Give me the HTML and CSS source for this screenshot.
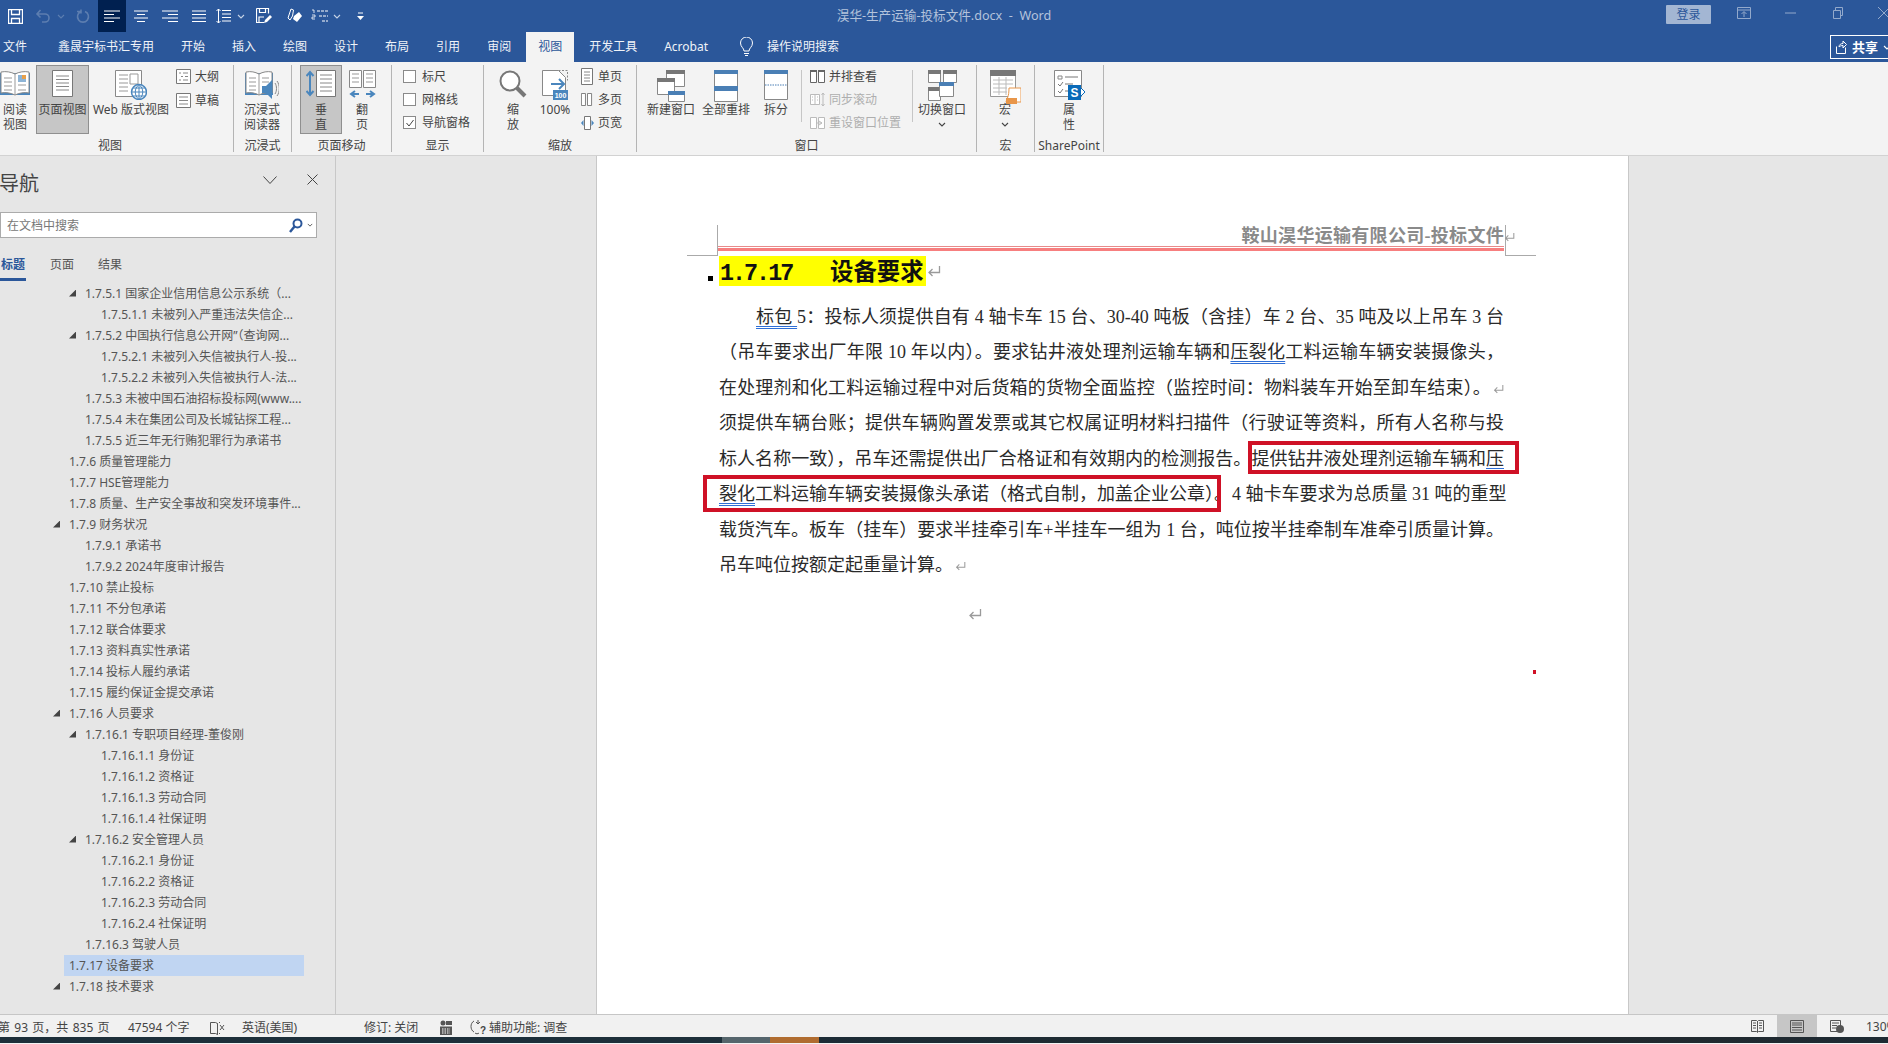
FILE: index.html
```html
<!DOCTYPE html>
<html lang="zh">
<head>
<meta charset="utf-8">
<title>Word</title>
<link rel="stylesheet" href="styles.css">
</head>
<body>
<svg class="defs" width="0" height="0"><defs>
<symbol id="ret" viewBox="0 0 14 12"><path d="M12.5 1v6.5H2M5.5 4 2 7.5 5.5 11" fill="none" stroke="currentColor" stroke-width="1.3"/></symbol>
<symbol id="chev" viewBox="0 0 8 5"><path d="M1 1l3 3 3-3" fill="none" stroke="currentColor" stroke-width="1.1"/></symbol>
</defs></svg>

<header class="titlebar">
  <div class="qat">
    <span class="q w30"><svg width="15" height="15" viewBox="0 0 15 15"><path d="M.5.5h14v14H.5zM3.500.5v5h8v-5M3.500 14.500v-5h8v5" fill="none" stroke="#fff" stroke-width="1.300"/></svg></span>
    <span class="q w24 dim"><svg width="15" height="14" viewBox="0 0 15 14"><path d="M2 5h8a4 4 0 0 1 0 8H7M5.500 1 2 5l3.500 3.500" fill="none" stroke="currentColor" stroke-width="1.600"/></svg></span>
    <span class="q w14 dim"><svg width="8" height="5"><use href="#chev"/></svg></span>
    <span class="q w30 dim"><svg width="14" height="14" viewBox="0 0 14 14"><path d="M9 2.500a5.500 5.500 0 1 1-4 0M5 .5v4M5 2.500H1" fill="none" stroke="currentColor" stroke-width="1.600"/></svg></span>
    <span class="q w28 active"><svg width="16" height="12"><path d="M0 1h16M0 4.500h10M0 8h16M0 11.500h10" stroke="#fff"/></svg></span>
    <span class="q w29"><svg width="14" height="12"><path d="M0 1h14M3 4.500h8M0 8h14M3 11.500h8" stroke="#fff"/></svg></span>
    <span class="q w29"><svg width="16" height="12"><path d="M0 1h16M6 4.500h10M0 8h16M6 11.500h10" stroke="#fff"/></svg></span>
    <span class="q w29"><svg width="14" height="12"><path d="M0 1h14M0 4.500h14M0 8h14M0 11.500h14" stroke="#fff"/></svg></span>
    <span class="q w21"><svg width="15" height="16" viewBox="0 0 15 16"><path d="M6 2.500h9M6 6h9M6 9.500h9M6 13h9M2.500 1v14M.5 3l2-2 2 2M.5 13l2 2 2-2" fill="none" stroke="#fff"/></svg></span>
    <span class="q w14 dim2"><svg width="8" height="5"><use href="#chev"/></svg></span>
    <span class="q w32"><svg width="16" height="16" viewBox="0 0 16 16"><path d="M.5.500h12v5M8 14.500H.5V.5M3.500.5v4h6v-4M3 14v-5h5" fill="none" stroke="#fff" stroke-width="1.200"/><path d="M8 15l1-3 5-5 2 2-5 5z" fill="#fff"/></svg></span>
    <span class="q w28"><svg width="15" height="16" viewBox="0 0 15 16"><path d="M4 1l2.500 1-1 6L3 12 1 10z" fill="none" stroke="#fff"/><path d="M7 8l5-4 3 4-5 6-4-3z" fill="#fff"/></svg></span>
    <span class="q w22"><svg width="17" height="14" viewBox="0 0 17 14"><path d="M6 2h11M8 7h9M11 12h6" stroke="#fff" stroke-dasharray="3 1"/><path d="M1 1h2v3M1 6h3v2H1v2h3" fill="none" stroke="#fff" stroke-width=".8"/></svg></span>
    <span class="q w14 dim2"><svg width="8" height="5"><use href="#chev"/></svg></span>
    <span class="q w32"><svg width="7" height="8"><path d="M1 1h5" stroke="#fff"/><path d="M0 4h7L3.500 8z" fill="#fff"/></svg></span>
  </div>
  <div class="doc-title">淏华-生产运输-投标文件.docx &nbsp;-&nbsp; Word</div>
  <div class="win">
    <span class="login">登录</span>
    <svg class="wi wi-a" width="14" height="12" viewBox="0 0 14 12"><path d="M.5.5h13v11H.5zM.5 3h13M7 10V5M4.500 7 7 4.500 9.500 7" fill="none" stroke="currentColor"/></svg>
    <svg class="wi wi-b" width="11" height="2"><path d="M0 1h11" stroke="currentColor"/></svg>
    <svg class="wi wi-c" width="10" height="12" viewBox="0 0 10 12"><path d="M.5 3.500h7v8h-7zM2.500 3.500v-3h7v8h-2" fill="none" stroke="currentColor"/></svg>
    <svg class="wi wi-d" width="12" height="12" viewBox="0 0 12 12"><path d="M0 0l12 12M12 0 0 12" stroke="currentColor"/></svg>
  </div>
</header>

<nav class="tabs">
  <span class="tab first">文件</span>
  <span class="tab">鑫晟宇标书汇专用</span>
  <span class="tab">开始</span>
  <span class="tab">插入</span>
  <span class="tab">绘图</span>
  <span class="tab">设计</span>
  <span class="tab">布局</span>
  <span class="tab">引用</span>
  <span class="tab">审阅</span>
  <span class="tab current">视图</span>
  <span class="tab">开发工具</span>
  <span class="tab">Acrobat</span>
  <svg class="bulb" width="13" height="20" viewBox="0 0 13 20"><path d="M4 14c0-3-3.500-4-3.500-8a6 6 0 0 1 12 0c0 4-3.500 5-3.500 8zM4 16.500h5M5 18.500h3" fill="none" stroke="#fff"/></svg>
  <span class="tab tell">操作说明搜索</span>
  <span class="share"><svg width="11" height="14" viewBox="0 0 11 14"><path d="M.5 6.500v7h9v-6M3 7c0-2.500 2-3.500 4-3.500V1l3.500 3.500L7 8V5.500C5 5.500 4 6 3 7z" fill="none" stroke="#fff"/></svg><b>共享</b><svg class="share-chev" width="8" height="5"><use href="#chev"/></svg></span>
</nav>

<section class="ribbon">
  <div class="grp g1">
    <div class="body">
      <div class="lg w30b">
        <div class="ic"><svg width="30" height="27" viewBox="0 0 30 27"><path d="M0 25h30V3H0z" fill="#4a86bd"/><path d="M1 2c5-1 10 0 14 2 4-2 9-3 14-2v21c-5-1-10 0-14 2-4-2-9-3-14-2z" fill="#fff" stroke="#888"/><path d="M15 4v21M4 8h8M4 12h8M4 16h8M4 20h8M18 15h8M18 20h8" stroke="#999"/><path d="M18 5h8v7h-8z" fill="#8db4d6"/><path d="M22 5h4v4h-4z" fill="#e8a04a"/></svg></div>
        <span class="lb">阅读<br>视图</span>
      </div>
      <div class="lg sel m6 w53">
        <div class="ic"><svg width="21" height="27" viewBox="0 0 21 27"><path d="M.5.500h20v26H.500z" fill="#fff" stroke="#777"/><path d="M4 6h13M4 9.500h13M4 13h13M4 16.500h13M4 20h13" stroke="#888"/></svg></div>
        <span class="lb">页面视图</span>
      </div>
      <div class="lg m1 w82">
        <div class="ic"><svg width="32" height="30" viewBox="0 0 32 30"><path d="M.5.500h26v26H.500z" fill="#fff" stroke="#888"/><path d="M4 5h9M4 9h9M4 13h9M4 17h9M4 21h9" stroke="#999"/><path d="M15 4h8v10h-8z" fill="none" stroke="#999"/><circle cx="24" cy="22" r="7.500" fill="#fff" stroke="#4a86bd" stroke-width="1.500"/><path d="M16.500 22h15M24 14.500v15M18 18h12M18 26h12M24 14.500c-5 4-5 11 0 15M24 14.500c5 4 5 11 0 15" fill="none" stroke="#4a86bd"/></svg></div>
        <span class="lb">Web 版式视图</span>
      </div>
      <div class="sm-col m4">
        <div class="sm"><svg width="15" height="15" viewBox="0 0 15 15"><path d="M.5.500h14v14H.500z" fill="#fff" stroke="#777"/><path d="M3 4h2M7 4h5M5 7.500h2M9 7.500h3M3 11h2M7 11h5" stroke="#888"/></svg><span>大纲</span></div>
        <div class="sm"><svg width="15" height="15" viewBox="0 0 15 15"><path d="M.5.500h14v14H.500z" fill="#fff" stroke="#777"/><path d="M3 4h9M3 7.500h9M3 11h9" stroke="#888"/></svg><span>草稿</span></div>
      </div>
    </div>
    <div class="gl gl-view">视图</div>
  </div>

  <div class="grp g2">
    <div class="body">
      <div class="lg w57">
        <div class="ic"><svg width="34" height="30" viewBox="0 0 34 30"><path d="M0 25h28V3H0z" fill="#4a86bd"/><path d="M1 2c5-1 9 0 13 2 4-2 8-3 13-2v21c-5-1-9 0-13 2-4-2-8-3-13-2z" fill="#fff" stroke="#888"/><path d="M14 4v21M4 8h7M4 12h7M4 16h7M4 20h7M17 8h7M17 12h7" stroke="#999"/><path d="M17 16h4l6-6v19l-6-6h-4z" fill="#4a86bd"/><path d="M30 13c2 3 2 8 0 11M32 11c3 4 3 11 0 15" fill="none" stroke="#888"/></svg></div>
        <span class="lb">沉浸式<br>阅读器</span>
      </div>
    </div>
    <div class="gl">沉浸式</div>
  </div>

  <div class="grp g3">
    <div class="body">
      <div class="lg sel m8 w42">
        <div class="ic"><svg width="30" height="27" viewBox="0 0 30 27"><path d="M10.500.500h19v26h-19z" fill="#fff" stroke="#777"/><path d="M14 5h12M14 9h12M14 13h12M14 17h12M14 21h12" stroke="#888"/><path d="M4 2v23M.5 6 4 2l3.500 4M.5 21 4 25l3.500-4" fill="none" stroke="#4a86bd" stroke-width="2"/></svg></div>
        <span class="lb">垂<br>直</span>
      </div>
      <div class="lg w40">
        <div class="ic"><svg width="27" height="28" viewBox="0 0 27 28"><path d="M.5.500h12v17H.500zM14.500.500h12v17h-12z" fill="#fff" stroke="#888"/><path d="M3 4h7M3 8h7M3 12h7M17 4h7M17 8h7M17 12h7" stroke="#999"/><path d="M2 24h8M6 21l-4 3 4 3M17 24h8M21 21l4 3-4 3" fill="none" stroke="#4a86bd" stroke-width="2"/></svg></div>
        <span class="lb">翻<br>页</span>
      </div>
    </div>
    <div class="gl">页面移动</div>
  </div>

  <div class="grp g4">
    <div class="body">
      <div class="sm-col m11">
        <div class="sm chk"><i class="box"></i><span>标尺</span></div>
        <div class="sm chk"><i class="box"></i><span>网格线</span></div>
        <div class="sm chk"><i class="box"><svg width="10" height="10" viewBox="0 0 10 10"><path d="M1.500 5l2.500 3 4.500-6" fill="none" stroke="#444"/></svg></i><span>导航窗格</span></div>
      </div>
    </div>
    <div class="gl">显示</div>
  </div>

  <div class="grp g5">
    <div class="body">
      <div class="lg m9 w40">
        <div class="ic"><svg width="28" height="28" viewBox="0 0 28 28"><circle cx="11" cy="11" r="9.500" fill="#fff" stroke="#777" stroke-width="2"/><path d="M18 18l8 8" stroke="#777" stroke-width="4"/></svg></div>
        <span class="lb">缩<br>放</span>
      </div>
      <div class="lg w44">
        <div class="ic"><svg width="27" height="30" viewBox="0 0 27 30"><path d="M.5.500h16l7 7v18H.500z" fill="#fff" stroke="#888"/><path d="M16.500.5h9v10" fill="none" stroke="#888" stroke-dasharray="2 1.500"/><path d="M9 14h12M17 9l5 5-5 5" fill="none" stroke="#4a86bd" stroke-width="2"/><rect x="11" y="20" width="15" height="10" fill="#4a86bd"/><text x="18.500" y="28" class="t100">100</text></svg></div>
        <span class="lb">100%</span>
      </div>
      <div class="sm-col m4">
        <div class="sm"><svg width="13" height="17" viewBox="0 0 13 17"><path d="M.5.500h11v16H.500z" fill="#fff" stroke="#777"/><path d="M3 4h6M3 7h6M3 10h6M3 13h6" stroke="#888"/></svg><span>单页</span></div>
        <div class="sm"><svg width="13" height="13" viewBox="0 0 16 13" preserveAspectRatio="none"><path d="M.5.500h5v12h-5zM8 .5h5v12H8z" fill="#fff" stroke="#777"/></svg><span>多页</span></div>
        <div class="sm"><svg width="13" height="14" viewBox="0 0 13 14"><path d="M3.500.500h6v13h-6z" fill="#fff" stroke="#777"/><path d="M2.500 4 0 7l2.500 3zM10.500 4 13 7l-2.500 3z" fill="#4a86bd"/></svg><span>页宽</span></div>
      </div>
    </div>
    <div class="gl">缩放</div>
  </div>

  <div class="grp g6">
    <div class="body">
      <div class="lg m7 w54">
        <div class="ic"><svg width="28" height="32" viewBox="0 0 28 32"><path d="M9.500.500h18v16h-18z" fill="#fff" stroke="#888"/><path d="M9 0h19v4H9z" fill="#777"/><path d="M.5 8.500h17v16H.500z" fill="#fff" stroke="#888"/><path d="M0 8h18v4H0z" fill="#777"/><path d="M11.500 21.500h16v10h-16z" fill="#fff" stroke="#888"/><path d="M11 21h17v4H11z" fill="#4a7fb5"/></svg></div>
        <span class="lb">新建窗口</span>
      </div>
      <div class="lg m1 w54">
        <div class="ic"><svg width="24" height="32" viewBox="0 0 24 32"><path d="M.5.500h23v31H.500z" fill="#fff" stroke="#888"/><path d="M0 0h24v4H0zM0 16h24v5H0z" fill="#4a7fb5"/></svg></div>
        <span class="lb">全部重排</span>
      </div>
      <div class="lg w46">
        <div class="ic"><svg width="24" height="30" viewBox="0 0 24 30"><path d="M.5.500h23v29H.500z" fill="#fff" stroke="#888"/><path d="M0 0h24v4H0z" fill="#4a7fb5"/><path d="M1 15h22" stroke="#4a7fb5" stroke-dasharray="1.500 1"/></svg></div>
        <span class="lb">拆分</span>
      </div>
      <i class="vsep m2"></i>
      <div class="sm-col m8 w102">
        <div class="sm win-sm"><svg width="15" height="13" viewBox="0 0 15 13"><path d="M.5 1.500h6v11h-6zM8.500 1.500h6v11h-6z" fill="#fff" stroke="#666"/><path d="M0 0h7v2H0zM8 0h7v2H8z" fill="#666"/></svg><span>并排查看</span></div>
        <div class="sm win-sm off"><svg width="15" height="15" viewBox="0 0 15 15"><path d="M.5 2.500h9v10h-9z" fill="#fff" stroke="#bbb"/><path d="M5 3v9M2 5h1M2 8h1M7 5h1M7 8h1M13 1v13M11.500 3 13 1l1.500 2M11.500 12l1.500 2 1.500-2" fill="none" stroke="#bbb"/></svg><span>同步滚动</span></div>
        <div class="sm win-sm off"><svg width="15" height="13" viewBox="0 0 15 13"><path d="M.5 1.500h6v11h-6zM8.500 1.500h6v11h-6z" fill="#fff" stroke="#bbb"/><path d="M6 7h6M9 5l3 2-3 2" fill="none" stroke="#bbb"/></svg><span>重设窗口位置</span></div>
      </div>
      <i class="vsep"></i>
      <div class="lg w58">
        <div class="ic"><svg width="29" height="32" viewBox="0 0 29 32"><path d="M.5.500h12v12H.500zM15.500.500h13v12h-13zM.5 17.500h12v13H.500z" fill="#fff" stroke="#888"/><path d="M0 0h13v4H0zM15 0h14v4H15zM0 17h13v4H0z" fill="#777"/><path d="M11.500 12.500h14v14h-14z" fill="#fff" stroke="#888"/><path d="M11 12h15v4H11z" fill="#4a7fb5"/></svg></div>
        <span class="lb">切换窗口<br><svg class="lb-chev" width="8" height="5"><use href="#chev"/></svg></span>
      </div>
    </div>
    <div class="gl">窗口</div>
  </div>

  <div class="grp g7">
    <div class="body">
      <div class="lg w57">
        <div class="ic"><svg width="31" height="34" viewBox="0 0 31 34"><path d="M.5.500h25v26H.500z" fill="#fff" stroke="#999"/><path d="M0 0h26v6H0z" fill="#777"/><path d="M3 10h20M3 14h20M3 18h14M3 22h14M9 7v18M16 7v18" stroke="#bbb"/><path d="M19 18h12v14H16c1-4 3-5 3-14z" fill="#fff" stroke="#e8964a"/><path d="M16 28h11v6H16z" fill="#e8964a"/></svg></div>
        <span class="lb">宏<br><svg class="lb-chev" width="8" height="5"><use href="#chev"/></svg></span>
      </div>
    </div>
    <div class="gl">宏</div>
  </div>

  <div class="grp g8">
    <div class="body">
      <div class="lg w68">
        <div class="ic"><svg width="31" height="31" viewBox="0 0 31 31"><path d="M.5.500h27v26H.500z" fill="#fff" stroke="#888"/><path d="M4 6h4v3H4z" fill="none" stroke="#888"/><path d="M11 7h13M11 14h8M11 21h6M4 14l2 2 3-4M4 21l2 2 3-4" fill="none" stroke="#777"/><path d="M24 15l7 7-7 7z" fill="#fff" stroke="#0a6ab8"/><path d="M14 15h13v15H14z" fill="#0a6ab8"/><text x="20.500" y="27" class="ts">S</text></svg></div>
        <span class="lb">属<br>性</span>
      </div>
    </div>
    <div class="gl">SharePoint</div>
  </div>
</section>

<main class="main">
  <aside class="nav">
    <div class="nav-head">
      <span class="nav-title">导航</span>
      <svg class="nav-chev" width="14" height="8" viewBox="0 0 14 8"><path d="M.5.500 7 7.500 13.500.5" fill="none" stroke="#444"/></svg>
      <svg class="nav-x" width="11" height="11" viewBox="0 0 11 11"><path d="M.5.500l10 10M10.500.500l-10 10" stroke="#444"/></svg>
    </div>
    <div class="search">
      <span class="ph">在文档中搜索</span>
      <svg width="14" height="15" viewBox="0 0 14 15"><circle cx="8.500" cy="5.500" r="4" fill="none" stroke="#2b579a" stroke-width="2"/><path d="M5.500 8.500 1 14" stroke="#2b579a" stroke-width="2.500"/></svg>
      <svg class="s-chev" width="6" height="4" viewBox="0 0 8 5"><use href="#chev"/></svg>
    </div>
    <div class="nav-tabs">
      <span class="nt on">标题</span>
      <span class="nt">页面</span>
      <span class="nt">结果</span>
    </div>
    <ul class="tree">
      <li class="l2 open">1.7.5.1 国家企业信用信息公示系统（...</li>
      <li class="l3">1.7.5.1.1 未被列入严重违法失信企...</li>
      <li class="l2 open">1.7.5.2 中国执行信息公开网”（查询网...</li>
      <li class="l3">1.7.5.2.1 未被列入失信被执行人-投...</li>
      <li class="l3">1.7.5.2.2 未被列入失信被执行人-法...</li>
      <li class="l2">1.7.5.3 未被中国石油招标投标网(www....</li>
      <li class="l2">1.7.5.4 未在集团公司及长城钻探工程...</li>
      <li class="l2">1.7.5.5 近三年无行贿犯罪行为承诺书</li>
      <li class="l1">1.7.6 质量管理能力</li>
      <li class="l1">1.7.7 HSE管理能力</li>
      <li class="l1">1.7.8 质量、生产安全事故和突发环境事件...</li>
      <li class="l1 open">1.7.9 财务状况</li>
      <li class="l2">1.7.9.1 承诺书</li>
      <li class="l2">1.7.9.2 2024年度审计报告</li>
      <li class="l1">1.7.10 禁止投标</li>
      <li class="l1">1.7.11 不分包承诺</li>
      <li class="l1">1.7.12 联合体要求</li>
      <li class="l1">1.7.13 资料真实性承诺</li>
      <li class="l1">1.7.14 投标人履约承诺</li>
      <li class="l1">1.7.15 履约保证金提交承诺</li>
      <li class="l1 open">1.7.16 人员要求</li>
      <li class="l2 open">1.7.16.1 专职项目经理-董俊刚</li>
      <li class="l3">1.7.16.1.1 身份证</li>
      <li class="l3">1.7.16.1.2 资格证</li>
      <li class="l3">1.7.16.1.3 劳动合同</li>
      <li class="l3">1.7.16.1.4 社保证明</li>
      <li class="l2 open">1.7.16.2 安全管理人员</li>
      <li class="l3">1.7.16.2.1 身份证</li>
      <li class="l3">1.7.16.2.2 资格证</li>
      <li class="l3">1.7.16.2.3 劳动合同</li>
      <li class="l3">1.7.16.2.4 社保证明</li>
      <li class="l2">1.7.16.3 驾驶人员</li>
      <li class="l1 cur">1.7.17 设备要求</li>
      <li class="l1 open">1.7.18 技术要求</li>
    </ul>
  </aside>

  <div class="canvas">
    <article class="page">
      <i class="crop crop-lv"></i><i class="crop crop-lh"></i>
      <i class="crop crop-rv"></i><i class="crop crop-rh"></i>
      <div class="hdr">鞍山淏华运输有限公司-投标文件<svg class="ret hret"><use href="#ret"/></svg></div>
      <div class="hdr-rule"></div>
      <h1 class="h"><i class="bullet"></i><span class="mark"><span class="num">1.7.17</span>设备要求</span><svg class="ret hret2"><use href="#ret"/></svg></h1>
      <div class="para">
        <div class="ln ind"><span class="dbl">标包 </span>5：投标人须提供自有 4 轴卡车 15 台、30-40 吨板（含挂）车 2 台、35 吨及以上吊车 3 台</div>
        <div class="ln">（吊车要求出厂年限 10 年以内）。要求钻井液处理剂运输车辆和<span class="dbl">压裂化</span>工料运输车辆安装摄像头，</div>
        <div class="ln">在处理剂和化工料运输过程中对后货箱的货物全面监控（监控时间：物料装车开始至卸车结束）。<svg class="ret rsm"><use href="#ret"/></svg></div>
        <div class="ln">须提供车辆台账；提供车辆购置发票或其它权属证明材料扫描件（行驶证等资料，所有人名称与投</div>
        <div class="ln">标人名称一致），吊车还需提供出厂合格证和有效期内的检测报告。提供钻井液处理剂运输车辆和<span class="dbl">压</span></div>
        <div class="ln"><span class="dbl">裂化</span>工料运输车辆安装摄像头承诺（格式自制，加盖企业公章）。4 轴卡车要求为总质量 31 吨的重型</div>
        <div class="ln">载货汽车。板车（挂车）要求半挂牵引车+半挂车一组为 1 台，吨位按半挂牵制车准牵引质量计算。</div>
        <div class="ln end">吊车吨位按额定起重量计算。<svg class="ret rsm"><use href="#ret"/></svg></div>
      </div>
      <div class="blank"><svg class="ret rbig"><use href="#ret"/></svg></div>
      <i class="redbox rb1"></i>
      <i class="redbox rb2"></i>
      <i class="reddot"></i>
    </article>
  </div>
</main>

<footer class="status">
  <div class="st-left">
    <span class="c c1">第 93 页，共 835 页</span>
    <span class="c c2">47594 个字</span>
    <span class="c c3"><svg width="15" height="15" viewBox="0 0 15 15"><path d="M.5 2.500h5l2 1v11l-2-1h-5zM7.500 3.500v11M9 2.500h1M9 13.500h1" fill="none" stroke="#555"/><path d="M10 5l4 5M14 5l-4 5" stroke="#555"/></svg></span>
    <span class="c c4">英语(美国)</span>
    <span class="c c5">修订: 关闭</span>
    <span class="c c6"><svg width="12" height="15" viewBox="0 0 12 15"><circle cx="3" cy="3" r="2.500" fill="#555"/><path d="M6 1h6v4H6zM0 6.500h12V15H0z" fill="#555"/><path d="M2 9h8M2 11h8M2 13h8" stroke="#fff" stroke-dasharray="1.500 1"/></svg></span>
    <span class="c c7"><svg width="17" height="16" viewBox="0 0 17 16"><path d="M4 2C0 4 0 11 4 13M8 1v4M6 3l2 2 2-2M9 14c-1 1-3 1-4 0" fill="none" stroke="#555"/><text x="13" y="15" class="tq">?</text></svg>辅助功能: 调查</span>
  </div>
  <div class="st-right">
    <span class="vb"><svg width="13" height="13" viewBox="0 0 13 13"><path d="M.5.500h5l1 1 1-1h5v11h-5l-1 1-1-1h-5z" fill="none" stroke="#555"/><path d="M6.500 1v11M2 3h3M2 5.500h3M2 8h3M8 3h3M8 5.500h3M8 8h3" stroke="#555"/></svg></span>
    <span class="vb vb-on"><svg width="14" height="13" viewBox="0 0 14 13"><path d="M.5.500h13v12H.500z" fill="none" stroke="#555"/><path d="M2 3h10M2 5h10M2 7.500h10M2 10h10" stroke="#555"/></svg></span>
    <span class="vb"><svg width="14" height="13" viewBox="0 0 14 13"><path d="M.5.500h10v11H.500z" fill="#f1f1f1" stroke="#555"/><path d="M2 3h7M2 5.500h5M2 8h4" stroke="#555"/><circle cx="10" cy="9" r="4" fill="#555"/></svg></span>
    <span class="zoom">130%</span>
  </div>
</footer>
<div class="taskbar"></div>
</body>
</html>
```

FILE: styles.css
```css
* { box-sizing: border-box; }
html, body { margin: 0; padding: 0; }
body {
  width: 1888px;
  height: 1044px;
  overflow: hidden;
  position: relative;
  font: 12px/15px "Noto Sans", "Noto Sans CJK SC", sans-serif;
  color: #444;
  background: #f3f3f3;
}
.defs { position: absolute; }
svg { display: block; flex: none; }

/* title bar */
.titlebar {
  height: 32px;
  background: #2b579a;
  display: grid;
  grid-template-columns: 1fr auto 1fr;
  align-items: center;
  color: #fff;
}
.qat { display: flex; height: 32px; }
.q { display: flex; align-items: center; justify-content: center; height: 32px; color: #fff; }
.dim { color: #5d7eb0; }
.dim2 { color: #c6d3e6; }
.active { background: #002050; }
.w14 { width: 14px; }
.w21 { width: 21px; }
.w22 { width: 22px; }
.w24 { width: 24px; }
.w28 { width: 28px; }
.w29 { width: 29px; }
.w30 { width: 30px; }
.w32 { width: 32px; }
.doc-title { color: #b4c3dc; font-size: 12.600px; line-height: 30px; height: 30px; white-space: nowrap; }
.win { display: flex; align-items: center; justify-content: flex-end; color: #93a9cb; height: 32px; overflow: hidden; }
.login {
  width: 45px; height: 19px; margin-top: -3px;
  background: #a3b6d3; color: #2b579a; border-radius: 1px;
  text-align: center; line-height: 19px;
}
.wi { margin-top: -6px; }
.wi-a { margin-left: 26px; }
.wi-b { margin-left: 34px; }
.wi-c { margin-left: 37px; }
.wi-d { margin-left: 35px; margin-right: -2px; }

/* tabs */
.tabs {
  height: 30px;
  background: #2b579a;
  display: flex;
  align-items: stretch;
  gap: 27px;
  padding-left: 3px;
  color: #fff;
  overflow: hidden;
}
.tab { line-height: 30px; height: 30px; white-space: nowrap; color: #f0f3f8; }
.tab.first { margin-right: 4px; }
.tab.current {
  background: #f3f3f3; color: #2b579a;
  padding: 0 12px; margin: 0 -12px;
}
.bulb { margin: 5px 0 0 5px; }
.tell { margin-left: -13px; }
.share {
  margin-left: auto;
  margin-right: -6px;
  margin-top: 3px;
  height: 24px;
  width: 64px;
  border: 1px solid #fff;
  display: flex;
  align-items: center;
  padding-left: 5px;
  color: #fff;
}
.share b { font-size: 13px; margin-left: 5px; }
.share-chev { margin-left: 5px; color: #fff; }

/* ribbon */
.ribbon {
  height: 94px;
  background: #f3f3f3;
  border-bottom: 1px solid #d2d2d2;
  display: flex;
  padding-top: 3px;
  overflow: hidden;
}
.grp { height: 87px; border-right: 1px solid #b4b4b4; display: flex; flex-direction: column; flex: none; }
.g1 { width: 234px; }
.g2 { width: 58px; }
.g3 { width: 100px; }
.g4 { width: 92px; }
.g5 { width: 153px; }
.g6 { width: 340px; }
.g7 { width: 58px; }
.g8 { width: 69px; }
.body { height: 69px; display: flex; }
.gl { height: 18px; padding-top: 4px; text-align: center; white-space: nowrap; }
.gl-view { padding-right: 13px; }
.lg {
  height: 69px;
  border: 1px solid transparent;
  padding-top: 4px;
  display: flex;
  flex-direction: column;
  align-items: center;
  flex: none;
}
.lg.sel { background: #c6c6c6; border-color: #8f8f8f; }
.ic { height: 32px; }
.lb { text-align: center; white-space: nowrap; color: #444; }
.lb-chev { margin: 5px auto 0; color: #444; }
.w30b { width: 30px; }
.w40 { width: 40px; }
.w42 { width: 42px; }
.w44 { width: 44px; }
.w46 { width: 46px; }
.w53 { width: 53px; }
.w54 { width: 54px; }
.w57 { width: 56px; }
.w58 { width: 58px; }
.w68 { width: 68px; }
.w82 { width: 82px; }
.w102 { width: 102px; flex: none; }
.m1 { margin-left: 1px; }
.m2 { margin-left: 2px; }
.m4 { margin-left: 4px; }
.m6 { margin-left: 6px; }
.m7 { margin-left: 7px; }
.m8 { margin-left: 8px; }
.m9 { margin-left: 9px; }
.m11 { margin-left: 11px; }
.sm-col { display: flex; flex-direction: column; padding-top: 0; }
.sm { height: 23.500px; display: flex; align-items: center; gap: 4px; white-space: nowrap; }
.chk { gap: 6px; }
.win-sm svg { width: 15px; }
.off { color: #aeaeae; }
.box {
  width: 13px; height: 13px; border: 1px solid #8a8a8a; background: #fff;
  display: flex; align-items: center; justify-content: center; flex: none;
}
.vsep { width: 1px; height: 52px; margin-top: 5px; background: #c6c6c6; flex: none; }
.t100 { font: bold 7px "Liberation Sans", sans-serif; fill: #fff; text-anchor: middle; }
.ts { font: bold 12px "Liberation Sans", sans-serif; fill: #fff; text-anchor: middle; }
.tq { font: bold 10px "Liberation Sans", sans-serif; fill: #444; text-anchor: middle; }

/* main */
.main { height: 858px; display: flex; overflow: hidden; }
.nav { width: 336px; flex: none; background: #e6e6e6; border-right: 1px solid #c8c8c8; display: flex; flex-direction: column; }
.nav-head { height: 54px; display: flex; align-items: center; position: relative; }
.nav-title { font-size: 20px; line-height: 54px; margin: 2px 0 0 -1px; color: #444; }
.nav-chev { margin-left: 224px; margin-top: -7px; }
.nav-x { margin-left: 30px; margin-top: -7px; }
.search {
  margin-top: 2px;
  width: 317px; height: 26px;
  background: #fff; border: 1px solid #ababab;
  display: flex; align-items: center; padding-left: 6px;
}
.ph { flex: 1; color: #777; }
.s-chev { margin: 0 3px 0 4px; color: #444; }
.nav-tabs { display: flex; gap: 24px; height: 43px; padding-left: 1px; }
.nt { height: 43px; padding-top: 19px; line-height: 16px; color: #555; }
.nt.on { color: #2b579a; font-weight: 600; border-bottom: 3px solid #2b579a; margin-left: -1px; padding: 19px 1px 0; width: 26px; }
.tree { list-style: none; margin: 1.500px 0 0; padding: 0; color: #555; }
.tree li { height: 21px; line-height: 21px; white-space: nowrap; position: relative; }
.l1 { padding-left: 69px; }
.l2 { padding-left: 85px; }
.l3 { padding-left: 101px; }
.open::before {
  content: "";
  position: absolute;
  top: 7px;
  width: 7px; height: 7px;
  background: #444;
  clip-path: polygon(100% 0, 100% 100%, 0 100%);
}
.l1.open::before { left: 53px; }
.l2.open::before { left: 69px; }
.tree .cur { margin-left: 64px; width: 240px; padding-left: 5px; background: #c0d5f2; }

/* document */
.canvas { flex: 1; background: #e6e6e6; padding-left: 260px; min-width: 0; overflow: hidden; }
.page {
  width: 1033px;
  height: 858px;
  background: #fff;
  border-left: 1px solid #c8c8c8;
  border-right: 1px solid #c8c8c8;
  padding: 69px 0 0 122px;
  position: relative;
  font-family: "Liberation Serif", "Noto Sans CJK SC", serif;
  color: #2a2a2a;
}
.page > * { width: 785px; }
.hdr {
  height: 21px;
  text-align: right;
  font-size: 18px;
  line-height: 23px;
  font-weight: 700;
  letter-spacing: .3px;
  color: #8a8a8a;
  white-space: nowrap;
  position: relative;
}
.hret { position: absolute; right: -11px; top: 7px; }
.ret { color: #9a9a9a; width: 11px; height: 10px; display: inline-block; }
.hdr-rule { height: 5px; width: 787px; margin-left: -2px; border-top: 1px solid #e88a8a; border-bottom: 3px solid #f77f7f; }
.h {
  margin: 4px 0 0;
  height: 31px;
  font: bold 23.400px/30px "Liberation Serif", "Noto Sans CJK SC", serif;
  color: #111;
  display: flex;
  align-items: center;
  position: relative;
}
.bullet { position: absolute; left: -11px; top: 21px; width: 5px; height: 5px; background: #000; }
.mark { background: #ff0; height: 30px; width: 207px; display: block; white-space: nowrap; line-height: 32px; }
.num { display: inline-block; width: 111px; padding-left: 1px; font-family: "Liberation Mono", monospace; letter-spacing: -2px; }
.hret2 { width: 14px; height: 12px; margin-left: 1px; }
.para { margin-top: 13.600px; }
.ln {
  height: 35.500px;
  line-height: 35.500px;
  font-size: 18px;
  text-align: justify;
  text-align-last: justify;
  white-space: nowrap;
}
.ln.ind { padding-left: 37px; }
.ln.end { text-align-last: left; }
.rsm { margin-left: 2px; }
.dbl { text-decoration: underline double #2f6fd6 1px; text-underline-offset: 3px; }
.blank { margin-top: 24.400px; display: flex; padding-left: 249px; }
.rbig { width: 14px; height: 12px; }

/* things drawn over the page */
.crop { position: absolute; background: #aaa; display: block; }
.crop-lv { left: 120px; top: 69px; width: 1px !important; height: 31px; }
.crop-lh { left: 90px; top: 99px; width: 30px !important; height: 1px; }
.crop-rv { left: 908px; top: 69px; width: 1px !important; height: 31px; }
.crop-rh { left: 908px; top: 99px; width: 31px !important; height: 1px; }
.redbox { position: absolute; border: 4px solid #cf1126; display: block; }
.rb1 { left: 651px; top: 285px; width: 271px !important; height: 33px; }
.rb2 { left: 106px; top: 319px; width: 518px !important; height: 37px; }
.reddot { position: absolute; left: 936px; top: 514px; width: 3px !important; height: 4px; background: #d01025; display: block; }

/* status bar */
.status {
  height: 23px;
  background: #f1f1f1;
  border-top: 1px solid #c6c6c6;
  display: flex;
  color: #444;
  overflow: hidden;
}
.st-left { flex: 1; display: flex; min-width: 0; }
.c { display: flex; align-items: center; height: 24px; white-space: nowrap; flex: none; }
.c1 { width: 130px; margin-left: -2px; word-spacing: 1.200px; }
.c2 { width: 82px; }
.c3 { width: 32px; }
.c4 { width: 122px; }
.c5 { width: 76px; }
.c6 { width: 30px; }
.c7 { gap: 2px; }
.st-right { width: 151px; flex: none; display: flex; overflow: hidden; }
.vb { width: 40px; height: 22px; display: flex; align-items: center; justify-content: center; flex: none; }
.vb-on { background: #c6c6c6; }
.zoom { margin-left: 9px; line-height: 24px; flex: none; }

/* taskbar sliver */
.taskbar {
  height: 6px;
  background: linear-gradient(90deg, #1d2f3a 0, #1d2f3a 722px, #55656c 722px, #55656c 770px, #b06c30 770px, #b06c30 819px, #1c2c36 819px, #22292c 1500px, #1e2a33 100%);
}
```
